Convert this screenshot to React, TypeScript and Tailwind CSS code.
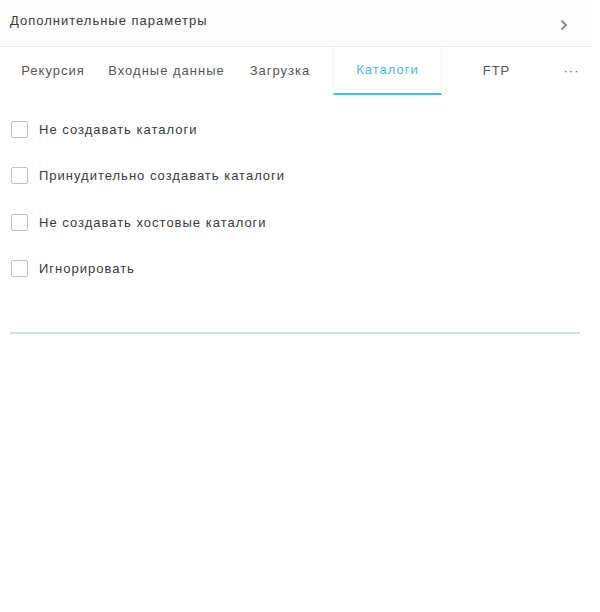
import React from "react";

const items = [
  "Не создавать каталоги",
  "Принудительно создавать каталоги",
  "Не создавать хостовые каталоги",
  "Игнорировать",
];

export default function App() {
  return (
    <div
      className="w-[600px] h-[612px] bg-white text-[13px] tracking-[1px] text-[#3a3a3a]"
      style={{ fontFamily: '"Liberation Sans", Arial, sans-serif' }}
    >
      <div className="w-[592px]">
        <div className="h-[47px] bg-[#fcfcfc] border-b border-[#e8edf2] flex items-center justify-between pl-[10px] pr-[24px]">
          <span className="-mt-[4px]">Дополнительные параметры</span>
          <svg width="8" height="12" viewBox="0 0 8 12" className="mt-[4px]">
            <path d="M1.5 1.5 L6 6 L1.5 10.5" fill="none" stroke="#888" strokeWidth="1.8" />
          </svg>
        </div>
        <div className="flex h-[48px] pl-[10px] text-[#555]">
          <div className="w-[86px] flex items-center justify-center">Рекурсия</div>
          <div className="w-[141px] flex items-center justify-center">Входные данные</div>
          <div className="w-[86px] flex items-center justify-center">Загрузка</div>
          <div className="w-[10px]" />
          <div className="w-[109px] flex items-center justify-center text-[#4ab8f0] border-b-2 border-[#4ab8f0] border-x border-x-[#f6f6f6]">
            Каталоги
          </div>
          <div className="w-[109px] flex items-center justify-center">FTP</div>
          <div className="w-[41px] flex items-center justify-center text-[#666] tracking-[1px]">···</div>
        </div>
        <div className="flex flex-col pl-[11px] pt-[11px]">
          {items.map((t) => (
            <label key={t} className="flex items-center h-[46.5px]">
              <span className="w-[17px] h-[17px] border border-[#b8c2d0] rounded-[2px] bg-white" />
              <span className="ml-[11px]">{t}</span>
            </label>
          ))}
        </div>
        <div className="mx-[10px] mt-[40px] h-[2px] bg-[#d3deea] w-[570px]" />
      </div>
    </div>
  );
}
